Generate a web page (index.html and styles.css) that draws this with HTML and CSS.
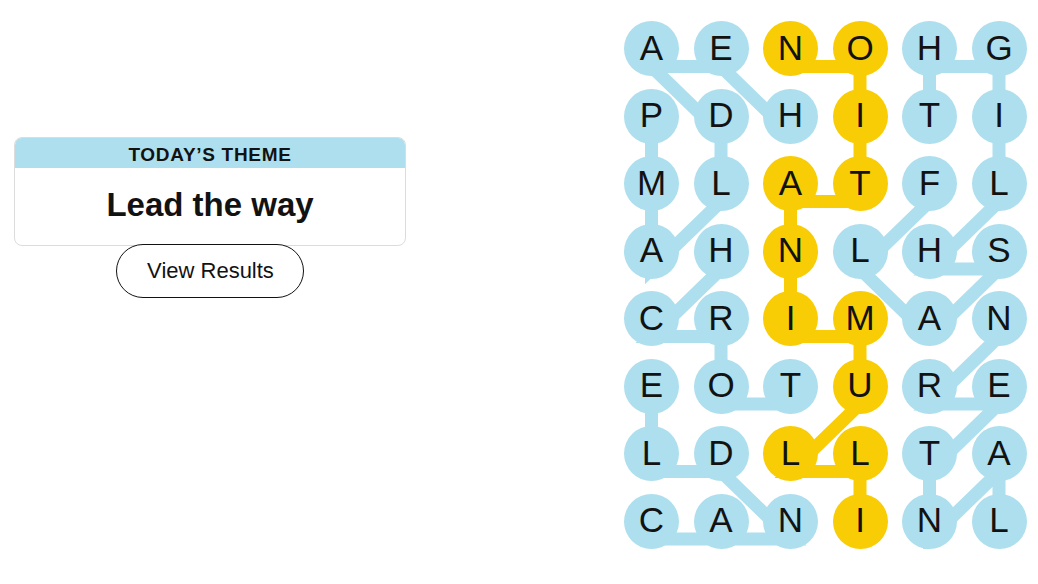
FILE: index.html
```html
<!DOCTYPE html>
<html lang="en">
<head>
    <meta charset="UTF-8">
    <title>Strands</title>
    <link rel="stylesheet" href="styles.css">
</head>
<body>

<div class="page">
    <div class="side-panel">
        <div class="theme-card">
            <div class="theme-header">TODAY’S THEME</div>
            <div class="theme-body">Lead the way</div>
        </div>
        <button class="results-btn">View Results</button>
    </div>

    <div class="board">
        <svg class="board-lines" id="board-lines" width="430" height="560"></svg>
        <div class="board-grid" id="board-grid">
            <!-- letters are filled in by the script -->
        </div>
    </div>
</div>

<script>
    const letters = [
        'AENOHG',
        'PDHITI',
        'MLATFL',
        'AHNLHS',
        'CRIMAN',
        'EOTURE',
        'LDLLTA',
        'CANINL'
    ];

    // found words as [row, col] paths
    const words = [
        { path: [[1,2],[0,1],[0,0],[1,1],[2,1],[3,0],[2,0],[1,0]] },
        { path: [[5,2],[5,1],[4,1],[4,0],[3,1]] },
        { path: [[7,0],[7,1],[7,2],[6,1],[6,0],[5,0]] },
        { path: [[2,4],[3,3],[4,4],[3,5],[3,4],[2,5],[1,5],[0,5],[0,4],[1,4]] },
        { path: [[7,5],[6,5],[7,4],[6,4],[5,5],[5,4],[4,5]] },
        { path: [[7,3],[6,3],[6,2],[5,3],[4,3],[4,2],[3,2],[2,2],[2,3],[1,3],[0,3],[0,2]], spangram: true }
    ];

    const colStep = 69.5;
    const rowStep = 67.5;
    const radius = 27.5;
    const lineDrop = 18;

    const grid = document.getElementById('board-grid');
    const svg = document.getElementById('board-lines');
    const spangramCells = new Set();

    words.forEach(word => {
        if (word.spangram) {
            word.path.forEach(([r, c]) => spangramCells.add(r + ',' + c));
        }
        const points = word.path
            .map(([r, c]) => `${radius + c * colStep},${radius + r * rowStep + lineDrop}`)
            .join(' ');
        const line = document.createElementNS('http://www.w3.org/2000/svg', 'polyline');
        line.setAttribute('points', points);
        line.setAttribute('class', word.spangram ? 'word-line spangram' : 'word-line');
        svg.appendChild(line);
    });

    letters.forEach((row, r) => {
        row.split('').forEach((ch, c) => {
            const cell = document.createElement('div');
            cell.className = spangramCells.has(r + ',' + c) ? 'letter spangram' : 'letter';
            cell.textContent = ch;
            grid.appendChild(cell);
        });
    });
</script>

</body>
</html>
```

FILE: styles.css
```css
body {
    margin: 0;
    background-color: #fff;
    color: #121212;
    font-family: "Liberation Sans", Arial, sans-serif;
}
.page {
    display: flex;
    align-items: flex-start;
}
.side-panel {
    width: 392px;
    margin-left: 14px;
    margin-top: 137px;
    display: flex;
    flex-direction: column;
    align-items: center;
}
.theme-card {
    width: 100%;
    box-sizing: border-box;
    border: 1px solid #dcdcdc;
    border-radius: 8px;
    overflow: hidden;
}
.theme-header {
    background-color: #aedfee;
    height: 30px;
    line-height: 33px;
    text-align: center;
    font-size: 19px;
    font-weight: bold;
    letter-spacing: 0.7px;
}
.theme-body {
    height: 77px;
    line-height: 74px;
    text-align: center;
    font-size: 33px;
    font-weight: bold;
}
.results-btn {
    margin-top: -2px;
    width: 188px;
    height: 54px;
    border: 1px solid #121212;
    border-radius: 27px;
    background-color: #fff;
    color: #121212;
    font-family: "Liberation Sans", Arial, sans-serif;
    font-size: 22px;
    padding: 0 0 0 1px;
}
.board {
    position: relative;
    margin-left: 218px;
    margin-top: 21px;
}
.board-lines {
    position: absolute;
    top: 0;
    left: 0;
}
.word-line {
    fill: none;
    stroke: #aedfee;
    stroke-width: 13;
    stroke-linejoin: miter;
    stroke-linecap: butt;
}
.word-line.spangram {
    stroke: #f8cd05;
}
.board-grid {
    position: relative;
    display: grid;
    grid-template-columns: repeat(6, 55px);
    grid-auto-rows: 55px;
    column-gap: 14.5px;
    row-gap: 12.5px;
}
.letter {
    width: 55px;
    height: 55px;
    border-radius: 50%;
    background-color: #aedfee;
    display: flex;
    justify-content: center;
    align-items: center;
    font-size: 35px;
    line-height: 1;
    padding-bottom: 3px;
    box-sizing: border-box;
}
.letter.spangram {
    background-color: #f8cd05;
}
```
